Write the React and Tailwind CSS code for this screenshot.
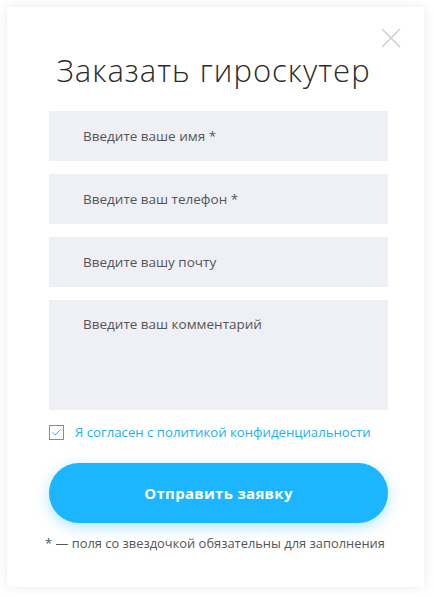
const FIELDS = [
  'Введите ваше имя *',
  'Введите ваш телефон *',
  'Введите вашу почту',
]

export default function App() {
  return (
    <div className="w-[433px] h-[596px] bg-white p-[7px] font-['Open_Sans','Liberation_Sans',sans-serif]">
      <div className="relative w-[417px] h-[580px] bg-white shadow-[0_0_12px_rgba(0,0,0,0.08)] flex flex-col items-start pl-[42px]">
        <button className="absolute right-[23px] top-[21px] w-[20px] h-[20px]">
          <svg width="20" height="20" viewBox="0 0 20 20" fill="none" stroke="#cfcfcf" strokeWidth="1.5">
            <path d="M1 1L19 19M19 1L1 19" />
          </svg>
        </button>

        <h1 className="mt-[43px] w-[339px] -ml-[5px] text-center text-[31px] leading-[40px] font-light tracking-[1px] text-[#2b2b2b] whitespace-nowrap">
          Заказать гироскутер
        </h1>

        <form className="mt-[21px] w-[339px] flex flex-col gap-[13px]">
          {FIELDS.map((f) => (
            <input
              key={f}
              placeholder={f}
              className="h-[50px] bg-[#eff0f5] pl-[34px] text-[13.5px] placeholder:text-[#555] outline-none"
            />
          ))}
          <textarea
            placeholder="Введите ваш комментарий"
            className="h-[110px] bg-[#eff0f5] pl-[34px] pt-[14px] text-[13.5px] placeholder:text-[#555] outline-none resize-none"
          />
        </form>

        <label className="mt-[13px] w-[339px] flex items-center gap-[11px]">
          <span className="w-[15px] h-[15px] border border-[#1eb0f0] flex items-center justify-center">
            <svg width="9" height="7" viewBox="0 0 9 7" fill="none" stroke="#1eb0f0" strokeWidth="1">
              <path d="M0.5 3.5L3.2 6L8.5 0.5" />
            </svg>
          </span>
          <span className="text-[13.2px] text-[#1eb0f0]">
            Я согласен с политикой конфиденциальности
          </span>
        </label>

        <button className="mt-[20px] w-[339px] h-[60px] rounded-full bg-[#1cb5ff] text-white font-bold text-[15px] tracking-[0.3px] shadow-[0_4px_14px_rgba(28,181,255,0.35)]">
          Отправить заявку
        </button>

        <p className="mt-[11px] -ml-[4px] text-[12.9px] text-[#555] whitespace-nowrap">
          * — поля со звездочкой обязательны для заполнения
        </p>
      </div>
    </div>
  )
}
